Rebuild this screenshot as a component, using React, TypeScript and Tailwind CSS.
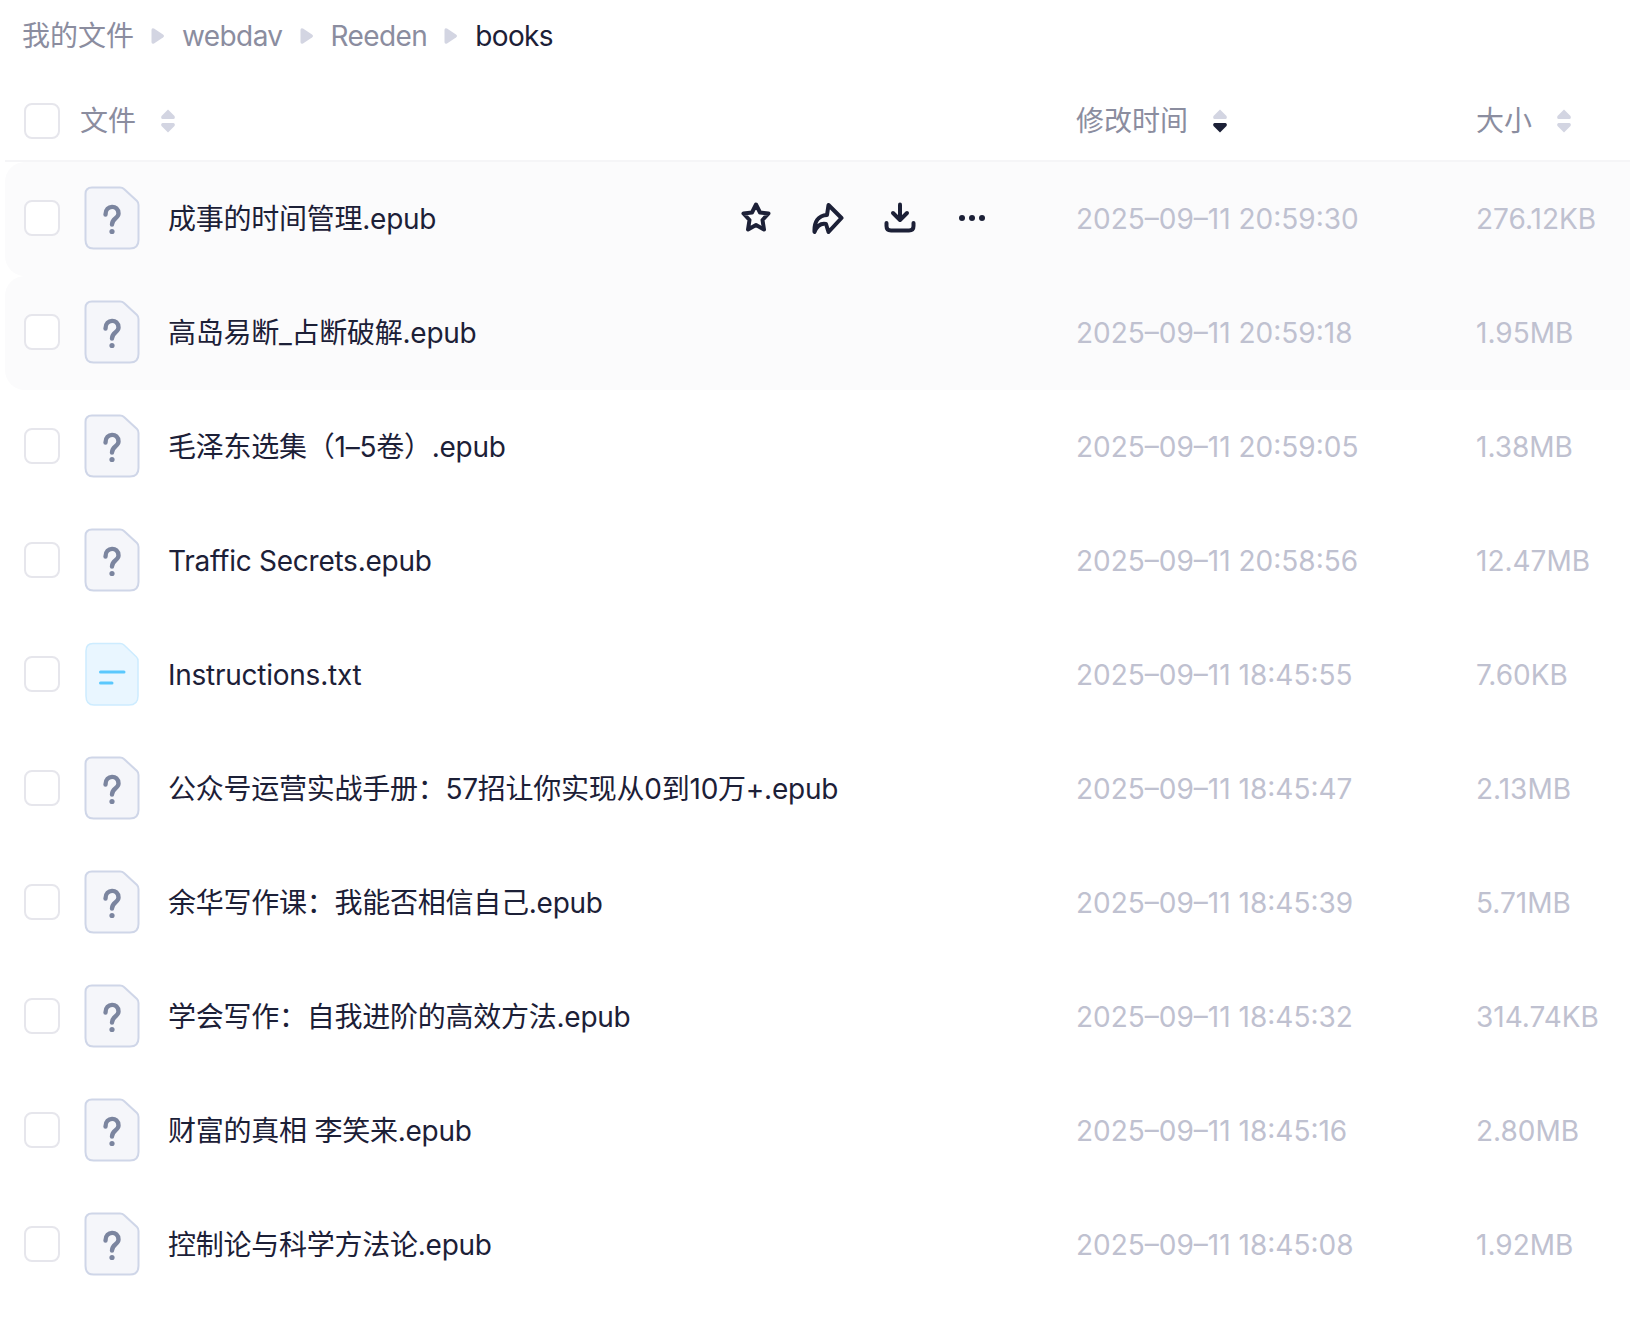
import { Fragment } from "react";

const files = [
  { name: "成事的时间管理.epub", time: "2025–09–11 20:59:30", size: "276.12KB", type: "unknown" },
  { name: "高岛易断_占断破解.epub", time: "2025–09–11 20:59:18", size: "1.95MB", type: "unknown" },
  { name: "毛泽东选集（1–5卷）.epub", time: "2025–09–11 20:59:05", size: "1.38MB", type: "unknown" },
  { name: "Traffic Secrets.epub", time: "2025–09–11 20:58:56", size: "12.47MB", type: "unknown" },
  { name: "Instructions.txt", time: "2025–09–11 18:45:55", size: "7.60KB", type: "txt" },
  { name: "公众号运营实战手册：57招让你实现从0到10万+.epub", time: "2025–09–11 18:45:47", size: "2.13MB", type: "unknown" },
  { name: "余华写作课：我能否相信自己.epub", time: "2025–09–11 18:45:39", size: "5.71MB", type: "unknown" },
  { name: "学会写作：自我进阶的高效方法.epub", time: "2025–09–11 18:45:32", size: "314.74KB", type: "unknown" },
  { name: "财富的真相 李笑来.epub", time: "2025–09–11 18:45:16", size: "2.80MB", type: "unknown" },
  { name: "控制论与科学方法论.epub", time: "2025–09–11 18:45:08", size: "1.92MB", type: "unknown" },
];

function Checkbox() {
  return <span className="block h-[36px] w-[36px] shrink-0 rounded-[8px] border-2 border-[#e6e6ec] bg-white" />;
}

function SortIcon({ active }: { active?: boolean }) {
  return (
    <svg width="16" height="26" viewBox="0 0 16 26" className="shrink-0">
      <path d="M8 1.5 L14.5 8 Q15.5 10.5 13.5 11 H2.5 Q0.5 10.5 1.5 8 Z" fill="#d3d5e2" />
      <path d="M8 24.5 L14.5 18 Q15.5 15.5 13.5 15 H2.5 Q0.5 15.5 1.5 18 Z" fill={active ? "#1c2037" : "#d3d5e2"} />
    </svg>
  );
}

function Crumb() {
  return (
    <svg width="14" height="18" viewBox="0 0 14 18" className="shrink-0">
      <path d="M0.5 3 Q0.5 0.5 3 1.5 L12 7.5 Q14 9 12 10.5 L3 16.5 Q0.5 17.5 0.5 15 Z" fill="#d3d5e2" />
    </svg>
  );
}

function FileIcon({ type }: { type: string }) {
  if (type === "txt") {
    return (
      <svg width="56" height="64" viewBox="0 0 56 64" className="shrink-0">
        <path d="M9 1.5 H36 Q38.5 1.5 40 3 L52.5 15 Q54 16.5 54 19 V54 Q54 63 45 63 H10 Q2 63 2 54 V9 Q2 1.5 9 1.5 Z" fill="#e9f6ff" stroke="#cdecff" strokeWidth="1.5" />
        <path d="M16.5 30 H40" stroke="#5ac8fd" strokeWidth="3" strokeLinecap="round" />
        <path d="M16.5 41 H28" stroke="#5ac8fd" strokeWidth="3" strokeLinecap="round" />
      </svg>
    );
  }
  return (
    <svg width="56" height="64" viewBox="0 0 56 64" className="shrink-0">
      <path d="M8 1.5 H36 Q38.5 1.5 40 3 L53 15 Q54.5 16.5 54.5 19 V54 Q54.5 62.5 46 62.5 H9.5 Q1.5 62.5 1.5 54 V8 Q1.5 1.5 8 1.5 Z" fill="#f5f6fa" stroke="#cfd6e8" strokeWidth="2" />
      <path d="M21.5 28.5 C21.5 18.5 34.5 18.5 34.5 27.5 C34.5 32.5 28 32 28 38.5" fill="none" stroke="#7b859f" strokeWidth="4.4" strokeLinecap="round" />
      <circle cx="28" cy="45.5" r="2.6" fill="#7b859f" />
    </svg>
  );
}

function RowActions() {
  return (
    <div className="flex shrink-0 items-center gap-[40px] text-[#1c2037]">
      <svg width="32" height="32" viewBox="0 0 32 32" fill="none" stroke="currentColor" strokeWidth="4" strokeLinejoin="round">
        <path d="M16 2.5 L20 10.5 L28.5 11.5 L22.5 18 L24 27.5 L16 23 L8 27.5 L9.5 18 L3.5 11.5 L12 10.5 Z" />
      </svg>
      <svg width="32" height="32" viewBox="0 0 32 32" fill="none" stroke="currentColor" strokeWidth="4" strokeLinejoin="round" strokeLinecap="round">
        <path d="M2.5 30 C2 20 6 13.5 15 13 L16.5 3 L29.5 16 L16.5 30 L14 22 C9 21 5 24 2.5 30 Z" />
      </svg>
      <svg width="32" height="32" viewBox="0 0 32 32" fill="none" stroke="currentColor" strokeWidth="4" strokeLinejoin="round" strokeLinecap="round">
        <path d="M16 2.5 V17" />
        <path d="M9 11 L16 18 L23 11" />
        <path d="M2.5 21 V24 Q2.5 28.5 7 28.5 H25 Q29.5 28.5 29.5 24 V21" />
      </svg>
      <svg width="32" height="32" viewBox="0 0 32 32" fill="currentColor">
        <circle cx="6" cy="16" r="3" />
        <circle cx="16" cy="16" r="3" />
        <circle cx="26" cy="16" r="3" />
      </svg>
    </div>
  );
}

export default function App() {
  return (
    <div className="h-[1336px] w-[1630px] overflow-hidden bg-white font-['Inter','Noto_Sans_CJK_SC',sans-serif] text-[28px] leading-[40px]">
      {/* Breadcrumb */}
      <div className="flex h-[71px] items-center pl-[22px]">
        <span className="text-[#8b8d9f]">我的文件</span>
        <span className="ml-[17px] mr-[17px]">
          <Crumb />
        </span>
        {["webdav", "Reeden"].map((c) => (
          <Fragment key={c}>
            <span className="tracking-[-0.6px] text-[#8b8d9f]">{c}</span>
            <span className="ml-[17px] mr-[17px]">
              <Crumb />
            </span>
          </Fragment>
        ))}
        <span className="tracking-[-0.6px] text-[#1c2037]">books</span>
      </div>

      {/* Header */}
      <div className="ml-[5px] flex h-[91px] items-center border-b-2 border-[#f5f5f7] pl-[19px] pt-[10px] text-[#8b8d9f]">
        <Checkbox />
        <div className="ml-[20px] flex w-[996px] items-center gap-[24px]">
          文件 <SortIcon />
        </div>
        <div className="flex w-[400px] items-center gap-[24px]">
          修改时间 <SortIcon active />
        </div>
        <div className="flex items-center gap-[24px]">
          大小 <SortIcon />
        </div>
      </div>

      {/* Rows */}
      {files.map((f, i) => (
        <div
          key={f.name}
          className={`ml-[5px] flex h-[114px] items-center rounded-l-[20px] pb-[2px] pl-[19px] ${i < 2 ? "bg-[#fbfbfc]" : ""}`}
        >
          <Checkbox />
          <div className="ml-[24px]">
            <FileIcon type={f.type} />
          </div>
          <div className="ml-[28px] flex w-[908px] items-center justify-between text-[#1c2037]">
            <span className="whitespace-nowrap pt-[2px] tracking-[-0.25px]">{f.name}</span>
            {i === 0 && (
              <div className="mr-[88px]">
                <RowActions />
              </div>
            )}
          </div>
          <div className="w-[400px] whitespace-nowrap pt-[2px] text-[#bfc1d0]">{f.time}</div>
          <div className="whitespace-nowrap pt-[2px] text-[#bfc1d0]">{f.size}</div>
        </div>
      ))}
    </div>
  );
}
